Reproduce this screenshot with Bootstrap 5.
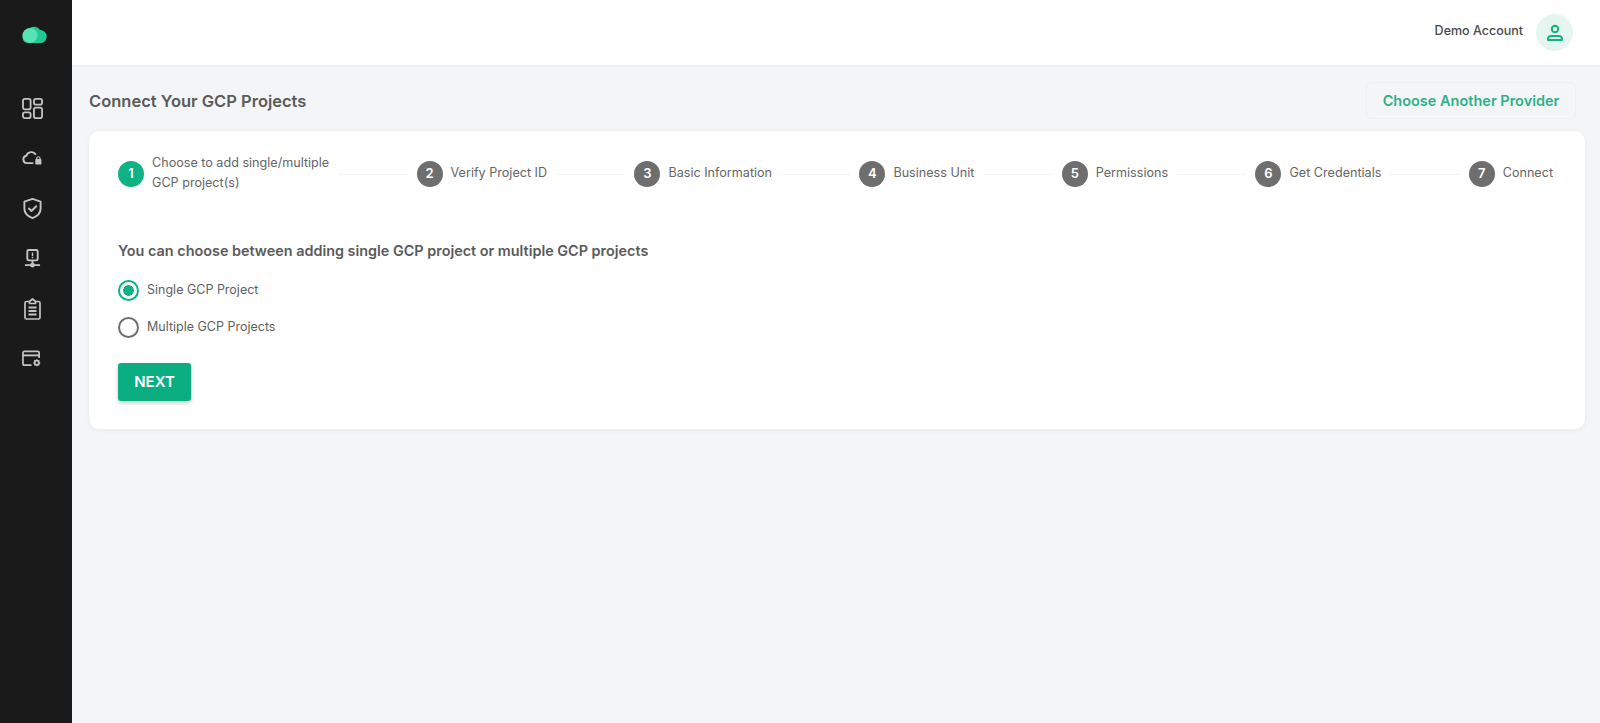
<!doctype html>
<html lang="en">
<head>
<meta charset="utf-8">
<meta name="viewport" content="width=device-width, initial-scale=1">
<title>Connect Your GCP Projects</title>
<link href="https://cdn.jsdelivr.net/npm/bootstrap@5.3.3/dist/css/bootstrap.min.css" rel="stylesheet">
<style>
html, body { height: 100%; }
body { font-family: Inter, "Liberation Sans", sans-serif; background: #f4f5f7; color: #5c5c5c; }
.app-shell { height: 723px; overflow: hidden; }
.side-rail { width: 72px; background: #1a1a1a; flex-shrink: 0; }
.side-logo { height: 34px; margin-top: 25px; margin-bottom: 24px; padding-right: 3px; }
.side-link { height: 50.2px; color: #c4c4c4; padding-right: 8px; }
.top-strip { height: 67px; background: #fff; border-bottom: 2px solid #ecedef; padding-right: 27px; }
.user-name { font-size: 12.5px; font-weight: 500; color: #4a4a4a; margin-right: 13px; position: relative; top: -1px; }
.user-avatar { width: 37px; height: 37px; background: #e5f6f1; }
.page-body { padding: 15px 15px 0 17px; }
.page-heading { font-size: 16.5px; font-weight: 600; color: #5a5a5a; margin: 2px 0 0; }
.btn-provider { font-size: 14.5px; font-weight: 600; color: #2eb18a; background: #f4f5f7; border: 1px solid #eeeff1; border-radius: 6px; width: 210px; height: 37px; padding: 0; margin-right: 9px; }
.main-panel { margin-top: 12px; height: 298px; border-radius: 10px; padding: 24px 32px 0 29px; box-shadow: 0 1px 5px rgba(0, 0, 0, .06); }
.step-num { width: 26px; height: 26px; font-size: 13px; font-weight: 600; background: #6e6e6e; color: #fff; flex-shrink: 0; }
.step-num.is-active { background: #0fb282; }
.step-text { font-size: 12.6px; line-height: 20px; color: #666; margin-left: 8px; white-space: nowrap; margin-top: -2px; }
.step-line { flex: 1 1 0; height: 1px; background: #f4f4f4; margin: 0 9px; }
.choose-text { font-size: 14.4px; font-weight: 600; color: #5a5a5a; margin: 47px 0 0; line-height: 22px; }
.radio-row { height: 38px; margin: 0; padding: 0; }
.radio-row + .radio-row { height: 37px; }
.radio-row .form-check-input { width: 21px; height: 21px; margin: 0 8px 0 0; float: none; border: 2px solid #6e6e6e; box-shadow: none; flex-shrink: 0; }
.radio-row .form-check-input:checked { background-color: #fff; background-image: radial-gradient(circle, #0fb282 0 5px, #fff 5.6px); border-color: #0fb282; }
.radio-row .form-check-label { font-size: 12.5px; color: #5f5f5f; }
.radio-group { margin-top: 9px; }
.btn-next { width: 73px; height: 38px; margin-top: 17px; padding: 0; background: #0bae80; border: 0; color: #fff; font-size: 15px; font-weight: 600; border-radius: 3px; box-shadow: 0 2px 4px rgba(0, 0, 0, .22); }
</style>
</head>
<body>
<div class="app-shell d-flex">
  <nav class="side-rail d-flex flex-column">
    <div class="side-logo d-flex justify-content-center">
      <svg width="25" height="18" viewBox="0 0 25 18"><path d="M6 18A6 6 0 0 1 5 6.200 7.500 7.500 0 0 1 18 5 6.500 6.500 0 0 1 18.500 18Z" fill="#23c994"/><circle cx="8" cy="10.500" r="7.500" fill="#57e3b6"/></svg>
    </div>
    <a class="side-link d-flex align-items-center justify-content-center" href="#">
      <svg width="21" height="21" viewBox="0 0 22 22" fill="none" stroke="currentColor" stroke-width="1.900"><rect x="1" y="1" width="8" height="11" rx="2"/><rect x="1" y="15" width="8" height="6" rx="2"/><rect x="12.500" y="1" width="8.500" height="6" rx="2"/><rect x="12.500" y="10" width="8.500" height="11" rx="2"/></svg>
    </a>
    <a class="side-link d-flex align-items-center justify-content-center" href="#">
      <svg width="20" height="16" viewBox="0 0 21 17" fill="none" stroke="currentColor" stroke-width="2"><path d="M12 14H5a4 4 0 0 1-.500-7.900A5.500 5.500 0 0 1 14.500 5"/><rect x="14" y="9.500" width="6.500" height="6" rx="1" fill="currentColor" stroke="none"/><path d="M15.500 10V8.500a1.800 1.800 0 0 1 3.500 0V10" stroke-width="1.200"/></svg>
    </a>
    <a class="side-link d-flex align-items-center justify-content-center" href="#">
      <svg width="19" height="21" viewBox="0 0 19 22" fill="none" stroke="currentColor" stroke-width="2"><path d="M9.500 1 18 3.800V11c0 5-3.600 8.200-8.500 10C4.600 19.200 1 16 1 11V3.800Z" stroke-linejoin="round"/><path d="m5.800 11 2.600 2.600 5-5" stroke-linecap="round" stroke-linejoin="round"/></svg>
    </a>
    <a class="side-link d-flex align-items-center justify-content-center" href="#">
      <svg width="17" height="20" viewBox="0 0 18 21" fill="none" stroke="currentColor" stroke-width="2"><rect x="3.500" y="1" width="11" height="11" rx="1.500"/><path d="M9 3.500v4M9 8.300v1.500" stroke-width="1.500"/><path d="M9 12v4M1 17h16"/><circle cx="9" cy="17" r="2.400" fill="currentColor" stroke="none"/></svg>
    </a>
    <a class="side-link d-flex align-items-center justify-content-center" href="#">
      <svg width="17" height="22" viewBox="0 0 17 22" fill="none" stroke="currentColor" stroke-width="1.700"><path d="M5.500 3.500H2.500A1.500 1.500 0 0 0 1 5v14.500A1.500 1.500 0 0 0 2.500 21h12a1.500 1.500 0 0 0 1.500-1.500V5a1.500 1.500 0 0 0-1.500-1.500h-3"/><path d="M5.500 5.500v-2L8.500 1l3 2.500v2Z" stroke-linejoin="round"/><path d="M4.500 9.500h8M4.500 13h8M4.500 16.500h8" stroke-width="1.800"/></svg>
    </a>
    <a class="side-link d-flex align-items-center justify-content-center" href="#">
      <svg width="20" height="18" viewBox="0 0 21 18" fill="none" stroke="currentColor" stroke-width="1.800"><path d="M10 15.500H2.500A1.500 1.500 0 0 1 1 14V2.500A1.500 1.500 0 0 1 2.500 1h14A1.500 1.500 0 0 1 18 2.500V8"/><path d="M1 5.200h17" stroke-width="2"/><circle cx="15.500" cy="13" r="2.200" stroke-width="1.800"/><path d="M15.500 9.300v1.400M15.500 15.300v1.400M11.800 13h1.400M17.800 13h1.400M12.900 10.400l1 1M17.100 14.600l1 1M12.900 15.600l1-1M17.100 11.400l1-1" stroke-width="1.400"/></svg>
    </a>
  </nav>
  <div class="flex-grow-1 d-flex flex-column">
    <header class="top-strip d-flex align-items-center justify-content-end">
      <span class="user-name">Demo Account</span>
      <span class="user-avatar rounded-circle d-flex align-items-center justify-content-center">
        <svg width="18" height="18" viewBox="0 0 18 18" fill="none" stroke="#12b283" stroke-width="2"><circle cx="9" cy="5" r="3.200"/><path d="M2 16v-1c0-2 1.500-3 3.500-3h7c2 0 3.500 1 3.500 3v1Z" stroke-linejoin="round"/></svg>
      </span>
    </header>
    <main class="page-body">
      <div class="d-flex align-items-center justify-content-between">
        <h1 class="page-heading">Connect Your GCP Projects</h1>
        <button type="button" class="btn btn-provider">Choose Another Provider</button>
      </div>
      <div class="main-panel bg-white">
        <div class="d-flex align-items-center">
          <div class="d-flex align-items-center">
            <span class="step-num is-active rounded-circle d-flex align-items-center justify-content-center">1</span>
            <span class="step-text">Choose to add single/multiple<br>GCP project(s)</span>
          </div>
          <div class="step-line"></div>
          <div class="d-flex align-items-center"><span class="step-num rounded-circle d-flex align-items-center justify-content-center">2</span><span class="step-text">Verify Project ID</span></div>
          <div class="step-line"></div>
          <div class="d-flex align-items-center"><span class="step-num rounded-circle d-flex align-items-center justify-content-center">3</span><span class="step-text">Basic Information</span></div>
          <div class="step-line"></div>
          <div class="d-flex align-items-center"><span class="step-num rounded-circle d-flex align-items-center justify-content-center">4</span><span class="step-text">Business Unit</span></div>
          <div class="step-line"></div>
          <div class="d-flex align-items-center"><span class="step-num rounded-circle d-flex align-items-center justify-content-center">5</span><span class="step-text">Permissions</span></div>
          <div class="step-line"></div>
          <div class="d-flex align-items-center"><span class="step-num rounded-circle d-flex align-items-center justify-content-center">6</span><span class="step-text">Get Credentials</span></div>
          <div class="step-line"></div>
          <div class="d-flex align-items-center"><span class="step-num rounded-circle d-flex align-items-center justify-content-center">7</span><span class="step-text">Connect</span></div>
        </div>
        <p class="choose-text">You can choose between adding single GCP project or multiple GCP projects</p>
        <div class="radio-group">
          <div class="form-check radio-row d-flex align-items-center">
            <input class="form-check-input" type="radio" name="projectCount" id="single" checked>
            <label class="form-check-label" for="single">Single GCP Project</label>
          </div>
          <div class="form-check radio-row d-flex align-items-center">
            <input class="form-check-input" type="radio" name="projectCount" id="multiple">
            <label class="form-check-label" for="multiple">Multiple GCP Projects</label>
          </div>
        </div>
        <button type="button" class="btn btn-next">NEXT</button>
      </div>
    </main>
  </div>
</div>
<script src="https://cdn.jsdelivr.net/npm/bootstrap@5.3.3/dist/js/bootstrap.bundle.min.js"></script>
</body>
</html>
